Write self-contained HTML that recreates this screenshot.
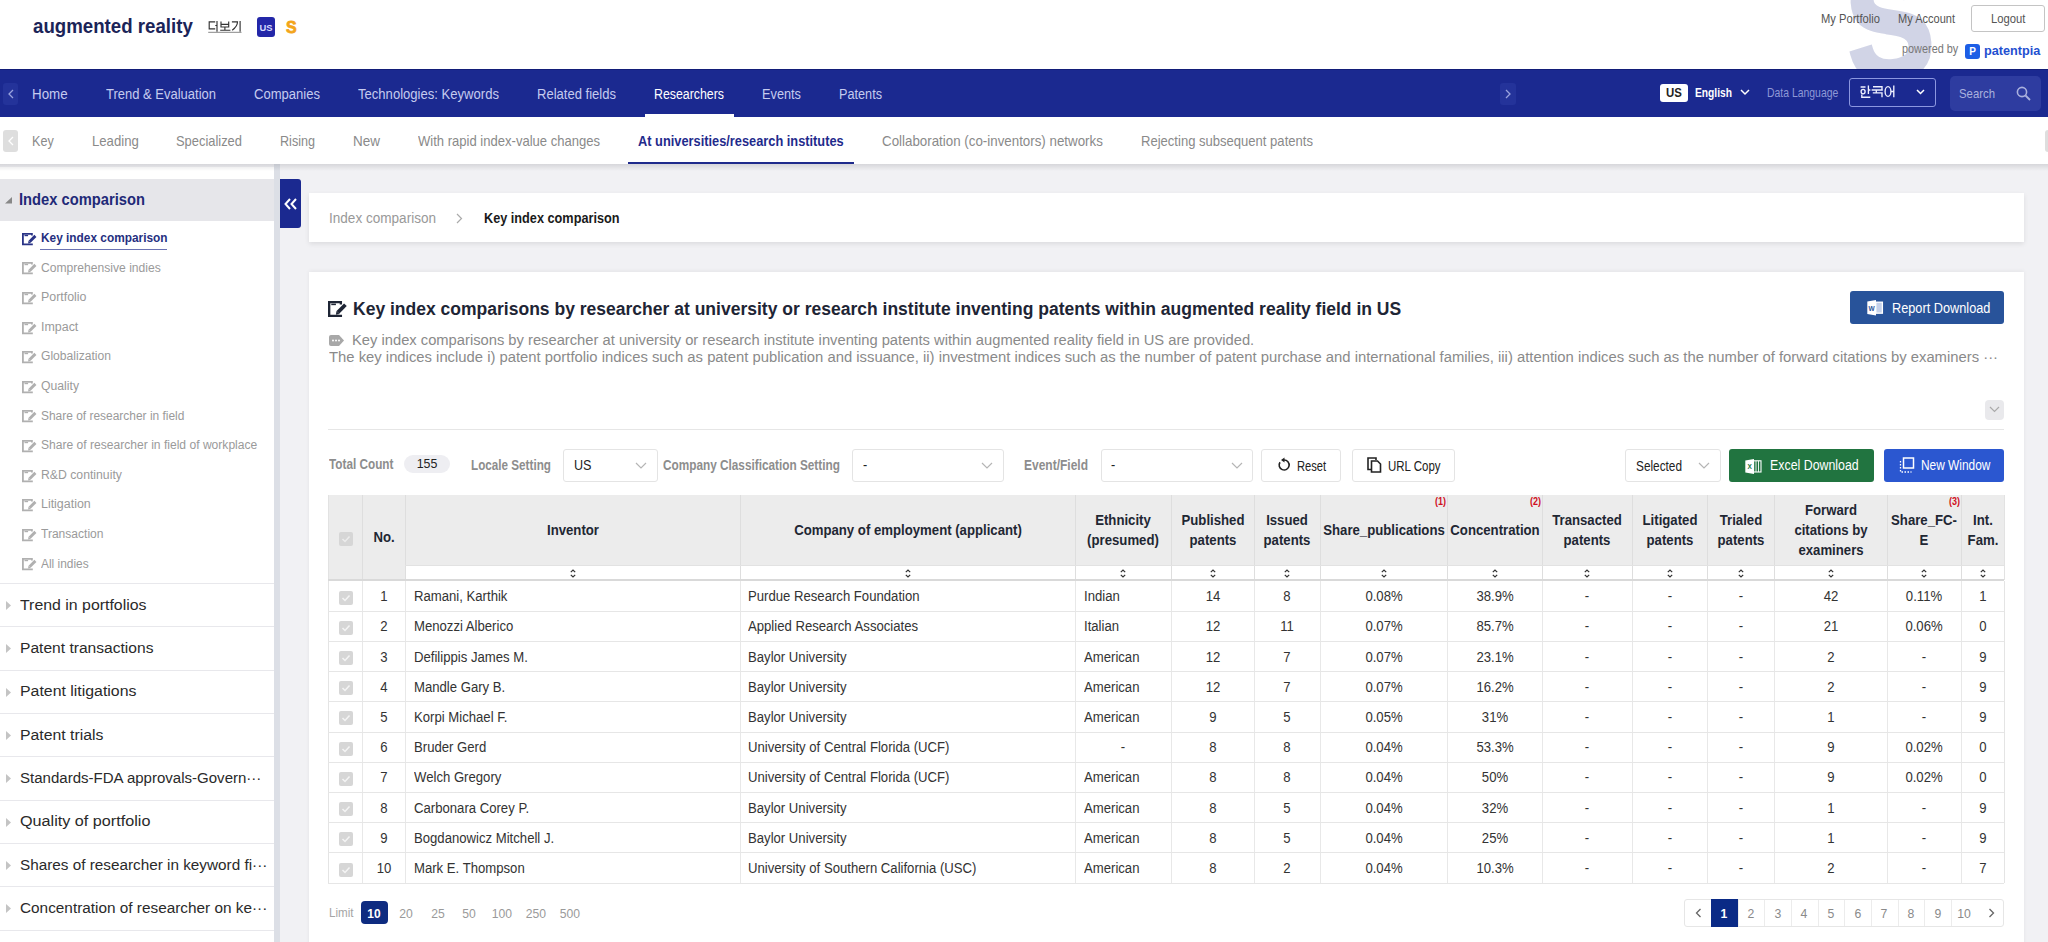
<!DOCTYPE html><html><head><meta charset="utf-8"><style>
html,body{margin:0;padding:0;width:2048px;height:942px;overflow:hidden;background:#f1f1f4;font-family:"Liberation Sans",sans-serif;}
.t{position:absolute;white-space:nowrap;line-height:1;}
svg{position:absolute;overflow:visible}
</style></head><body>

<div style="position:absolute;left:0px;top:0px;width:2048px;height:69px;background:#fff;overflow:hidden"></div>
<div style="position:absolute;left:0;top:0;width:2048px;height:69px;overflow:hidden"><div class="t" style="left:1847px;top:-40px;font-weight:bold;font-size:128px;color:#d1d4e6;-webkit-text-stroke:5px #d1d4e6;transform:scaleY(1.22) rotate(-5deg);transform-origin:50% 50%">S</div></div>
<div class="t" style="left:32.50px;top:17.05px;font-size:19.55px;color:#1b2458;font-weight:bold;transform:scaleX(0.9561);transform-origin:0 0;">augmented reality</div>
<svg style="left:208px;top:20px" width="35" height="14" viewBox="0 0 35 14">
<g fill="none" stroke="#333" stroke-width="1.15">
<path d="M7.2 1.8H1.2V8.9H7.2M9 1.1V11.7M7.3 5.5H9"/>
<path d="M13 1.4V7H20.7V1.4M13 4.35H20.7M16.9 7V10.2M12.2 10.2H22.4"/>
<path d="M23.9 1.8H29.5Q29.5 6.5 24.2 10.2M32.1 1.1V11.7"/>
</g><path d="M0.2 12.3H33.5" stroke="#888" stroke-width="1"/></svg>
<div style="position:absolute;left:256.5px;top:17px;width:18.7px;height:20.2px;background:#2327a8;border-radius:3px"></div>
<div class="t" style="left:-34.00px;top:23.14px;width:600px;text-align:center;font-size:9.40px;color:#d8dbff;font-weight:bold;transform:scaleX(1.0000);transform-origin:50% 0;">US</div>
<div class="t" style="left:286.30px;top:20.38px;font-size:16.80px;color:#f3a51a;font-weight:bold;transform:scaleX(0.9500);transform-origin:0 0;-webkit-text-stroke:0.8px #f3a51a;">S</div>
<div class="t" style="left:1821.00px;top:12.91px;font-size:12.15px;color:#555;font-weight:normal;transform:scaleX(0.9197);transform-origin:0 0;">My Portfolio</div>
<div class="t" style="left:1897.50px;top:12.91px;font-size:12.15px;color:#555;font-weight:normal;transform:scaleX(0.9075);transform-origin:0 0;">My Account</div>
<div style="position:absolute;left:1971.3px;top:5px;width:73.3px;height:27.3px;border:1px solid #c4c4c4;border-radius:3px;background:rgba(255,255,255,0.4);box-sizing:border-box"></div>
<div class="t" style="left:1991.30px;top:13.95px;font-size:11.87px;color:#555;font-weight:normal;transform:scaleX(0.9501);transform-origin:0 0;">Logout</div>
<div class="t" style="left:1901.70px;top:44.45px;font-size:11.87px;color:#777;font-weight:normal;transform:scaleX(0.9173);transform-origin:0 0;">powered by</div>
<div style="position:absolute;left:1965.3px;top:44.2px;width:14.7px;height:14.5px;background:#1d5ee6;border-radius:3px"></div>
<div class="t" style="left:1672.60px;top:47.14px;width:600px;text-align:center;font-size:10.00px;color:#fff;font-weight:bold;transform:scaleX(1.0000);transform-origin:50% 0;">P</div>
<div class="t" style="left:1984.00px;top:44.47px;font-size:13.27px;color:#1f50d0;font-weight:bold;transform:scaleX(0.9563);transform-origin:0 0;">patentpia</div>
<div style="position:absolute;left:0px;top:69px;width:2048px;height:48px;background:#1b2990"></div>
<div style="position:absolute;left:0px;top:69px;width:2048px;height:1.2px;background:#121d78"></div>
<div style="position:absolute;left:3px;top:82.7px;width:15px;height:22.3px;background:#24339a;border-radius:3px"></div>
<svg style="left:7px;top:89px" width="8" height="10"><path d="M6 1L2 5l4 4" fill="none" stroke="#9aa3de" stroke-width="1.3"/></svg>
<div class="t" style="left:32.20px;top:86.01px;font-size:15.22px;color:#c5cbef;font-weight:normal;transform:scaleX(0.8766);transform-origin:0 0;">Home</div>
<div class="t" style="left:106.00px;top:86.01px;font-size:15.22px;color:#c5cbef;font-weight:normal;transform:scaleX(0.8533);transform-origin:0 0;">Trend &amp; Evaluation</div>
<div class="t" style="left:254.00px;top:86.01px;font-size:15.22px;color:#c5cbef;font-weight:normal;transform:scaleX(0.8571);transform-origin:0 0;">Companies</div>
<div class="t" style="left:358.00px;top:86.01px;font-size:15.22px;color:#c5cbef;font-weight:normal;transform:scaleX(0.8589);transform-origin:0 0;">Technologies: Keywords</div>
<div class="t" style="left:537.00px;top:86.01px;font-size:15.22px;color:#c5cbef;font-weight:normal;transform:scaleX(0.8564);transform-origin:0 0;">Related fields</div>
<div class="t" style="left:654.00px;top:86.01px;font-size:15.22px;color:#ffffff;font-weight:normal;transform:scaleX(0.8111);transform-origin:0 0;">Researchers</div>
<div class="t" style="left:762.00px;top:86.01px;font-size:15.22px;color:#c5cbef;font-weight:normal;transform:scaleX(0.8380);transform-origin:0 0;">Events</div>
<div class="t" style="left:839.00px;top:86.01px;font-size:15.22px;color:#c5cbef;font-weight:normal;transform:scaleX(0.8329);transform-origin:0 0;">Patents</div>
<div style="position:absolute;left:645px;top:114px;width:89px;height:3px;background:#fff"></div>
<div style="position:absolute;left:1500px;top:83px;width:16px;height:22px;background:#24339a;border-radius:3px"></div>
<svg style="left:1504px;top:89px" width="8" height="10"><path d="M2 1l4 4-4 4" fill="none" stroke="#9aa3de" stroke-width="1.3"/></svg>
<div style="position:absolute;left:1659.5px;top:84.3px;width:28.3px;height:17.6px;background:#fff;border-radius:3px"></div>
<div class="t" style="left:1373.60px;top:87.04px;width:600px;text-align:center;font-size:12.00px;color:#222;font-weight:bold;transform:scaleX(0.9500);transform-origin:50% 0;">US</div>
<div class="t" style="left:1695.00px;top:85.79px;font-size:13.13px;color:#fff;font-weight:bold;transform:scaleX(0.7804);transform-origin:0 0;">English</div>
<svg style="left:1740px;top:89px" width="10" height="7"><path d="M1 1l4 4 4-4" fill="none" stroke="#fff" stroke-width="1.5"/></svg>
<div class="t" style="left:1766.50px;top:85.65px;font-size:13.41px;color:#8e98d6;font-weight:normal;transform:scaleX(0.7775);transform-origin:0 0;">Data Language</div>
<div style="position:absolute;left:1849px;top:78.2px;width:86.6px;height:28.8px;border:1.3px solid #8c97e0;border-radius:3px;box-sizing:border-box"></div>
<svg style="left:1859px;top:85px" width="38" height="14" viewBox="0 0 38 14">
<g fill="none" stroke="#eef0ff" stroke-width="1.35">
<path d="M1.6 2H6.5M9.4 0.5V9M9.4 5H11.4M2.8 9.6V12.2H11.3"/><ellipse cx="4.1" cy="6.6" rx="2" ry="2.2"/>
<path d="M14 1.7H23V4.6M12.6 5H23.8M17.3 5V7.5M13.8 7.9H23V12.3"/>
<ellipse cx="29" cy="6.5" rx="2.9" ry="4.9"/><path d="M34.8 0.5V12.3M32 6.5H34.8"/>
</g></svg>
<svg style="left:1916px;top:89px" width="9" height="6"><path d="M1 1l3.5 3.5L8 1" fill="none" stroke="#fff" stroke-width="1.5"/></svg>
<div style="position:absolute;left:1950px;top:75.6px;width:90.5px;height:35.2px;background:#2e3ca0;border-radius:5px"></div>
<div class="t" style="left:1959.00px;top:87.30px;font-size:12.99px;color:#aab1de;font-weight:normal;transform:scaleX(0.8747);transform-origin:0 0;">Search</div>
<svg style="left:2016px;top:86px" width="16" height="16"><circle cx="6" cy="6" r="4.6" fill="none" stroke="#aab1de" stroke-width="1.6"/><path d="M9.5 9.5l4.5 4.5" stroke="#aab1de" stroke-width="1.8"/></svg>
<div style="position:absolute;left:0px;top:117px;width:2048px;height:47px;background:#fff"></div>
<div style="position:absolute;left:3px;top:130px;width:15px;height:22.4px;background:#dedede;border-radius:3px"></div>
<svg style="left:7px;top:136px" width="8" height="10"><path d="M6 1L2 5l4 4" fill="none" stroke="#fff" stroke-width="1.3"/></svg>
<div style="position:absolute;left:2044.5px;top:130px;width:12px;height:22.4px;background:#dedede;border-radius:3px"></div>
<div class="t" style="left:32.00px;top:134.07px;font-size:14.80px;color:#8a8a8a;font-weight:normal;transform:scaleX(0.8506);transform-origin:0 0;">Key</div>
<div class="t" style="left:91.50px;top:134.07px;font-size:14.80px;color:#8a8a8a;font-weight:normal;transform:scaleX(0.8882);transform-origin:0 0;">Leading</div>
<div class="t" style="left:176.00px;top:134.07px;font-size:14.80px;color:#8a8a8a;font-weight:normal;transform:scaleX(0.8717);transform-origin:0 0;">Specialized</div>
<div class="t" style="left:280.00px;top:134.07px;font-size:14.80px;color:#8a8a8a;font-weight:normal;transform:scaleX(0.8507);transform-origin:0 0;">Rising</div>
<div class="t" style="left:353.00px;top:134.07px;font-size:14.80px;color:#8a8a8a;font-weight:normal;transform:scaleX(0.9116);transform-origin:0 0;">New</div>
<div class="t" style="left:417.60px;top:134.07px;font-size:14.80px;color:#8a8a8a;font-weight:normal;transform:scaleX(0.8816);transform-origin:0 0;">With rapid index-value changes</div>
<div class="t" style="left:638.00px;top:134.07px;font-size:14.80px;color:#1f2b8c;font-weight:bold;transform:scaleX(0.8655);transform-origin:0 0;">At universities/research institutes</div>
<div class="t" style="left:882.00px;top:134.07px;font-size:14.80px;color:#8a8a8a;font-weight:normal;transform:scaleX(0.9013);transform-origin:0 0;">Collaboration (co-inventors) networks</div>
<div class="t" style="left:1141.00px;top:134.07px;font-size:14.80px;color:#8a8a8a;font-weight:normal;transform:scaleX(0.8818);transform-origin:0 0;">Rejecting subsequent patents</div>
<div style="position:absolute;left:628.3px;top:161.5px;width:225.3px;height:2.6px;background:#1f2b8c"></div>
<div style="position:absolute;left:0px;top:167px;width:274px;height:775px;background:#fff"></div>
<div style="position:absolute;left:274px;top:164px;width:6px;height:778px;background:#dcdfe6"></div>
<div style="position:absolute;left:0px;top:179.2px;width:274px;height:42px;background:#e6e6ea"></div>
<svg style="left:5px;top:197px" width="8" height="7"><path d="M7 0L7 6.5L0 6.5Z" fill="#888"/></svg>
<div class="t" style="left:19.40px;top:191.40px;font-size:16.06px;color:#1f2a78;font-weight:bold;transform:scaleX(0.9167);transform-origin:0 0;">Index comparison</div>
<svg style="left:22px;top:232.79999999999998px" width="15.0" height="13.0" viewBox="0 0 15 13"><path d="M9.9 2.6V0.9H0.9V11.4H9.9V10.6" fill="none" stroke="#2a3486" stroke-width="1.8"/><path d="M2.5 2.6h3.6" stroke="#2a3486" stroke-width="1.2"/><path d="M13.4 2.9L7.6 8.7" stroke="#2a3486" stroke-width="2.9"/><path d="M6.1 10.6L6.5 7.7 8.9 10.1z" fill="#2a3486"/></svg>
<div class="t" style="left:40.90px;top:231.01px;font-size:13.69px;color:#26307f;font-weight:bold;transform:scaleX(0.8662);transform-origin:0 0;">Key index comparison</div>
<svg style="left:22px;top:262.4px" width="15.0" height="13.0" viewBox="0 0 15 13"><path d="M9.9 2.6V0.9H0.9V11.4H9.9V10.6" fill="none" stroke="#b0b0b0" stroke-width="1.8"/><path d="M2.5 2.6h3.6" stroke="#b0b0b0" stroke-width="1.2"/><path d="M13.4 2.9L7.6 8.7" stroke="#b0b0b0" stroke-width="2.9"/><path d="M6.1 10.6L6.5 7.7 8.9 10.1z" fill="#b0b0b0"/></svg>
<div class="t" style="left:40.90px;top:260.61px;font-size:13.69px;color:#9a9a9a;font-weight:normal;transform:scaleX(0.8846);transform-origin:0 0;">Comprehensive indies</div>
<svg style="left:22px;top:292.0px" width="15.0" height="13.0" viewBox="0 0 15 13"><path d="M9.9 2.6V0.9H0.9V11.4H9.9V10.6" fill="none" stroke="#b0b0b0" stroke-width="1.8"/><path d="M2.5 2.6h3.6" stroke="#b0b0b0" stroke-width="1.2"/><path d="M13.4 2.9L7.6 8.7" stroke="#b0b0b0" stroke-width="2.9"/><path d="M6.1 10.6L6.5 7.7 8.9 10.1z" fill="#b0b0b0"/></svg>
<div class="t" style="left:40.90px;top:290.21px;font-size:13.69px;color:#9a9a9a;font-weight:normal;transform:scaleX(0.9061);transform-origin:0 0;">Portfolio</div>
<svg style="left:22px;top:321.59999999999997px" width="15.0" height="13.0" viewBox="0 0 15 13"><path d="M9.9 2.6V0.9H0.9V11.4H9.9V10.6" fill="none" stroke="#b0b0b0" stroke-width="1.8"/><path d="M2.5 2.6h3.6" stroke="#b0b0b0" stroke-width="1.2"/><path d="M13.4 2.9L7.6 8.7" stroke="#b0b0b0" stroke-width="2.9"/><path d="M6.1 10.6L6.5 7.7 8.9 10.1z" fill="#b0b0b0"/></svg>
<div class="t" style="left:40.90px;top:319.81px;font-size:13.69px;color:#9a9a9a;font-weight:normal;transform:scaleX(0.9081);transform-origin:0 0;">Impact</div>
<svg style="left:22px;top:351.2px" width="15.0" height="13.0" viewBox="0 0 15 13"><path d="M9.9 2.6V0.9H0.9V11.4H9.9V10.6" fill="none" stroke="#b0b0b0" stroke-width="1.8"/><path d="M2.5 2.6h3.6" stroke="#b0b0b0" stroke-width="1.2"/><path d="M13.4 2.9L7.6 8.7" stroke="#b0b0b0" stroke-width="2.9"/><path d="M6.1 10.6L6.5 7.7 8.9 10.1z" fill="#b0b0b0"/></svg>
<div class="t" style="left:40.90px;top:349.41px;font-size:13.69px;color:#9a9a9a;font-weight:normal;transform:scaleX(0.8846);transform-origin:0 0;">Globalization</div>
<svg style="left:22px;top:380.8px" width="15.0" height="13.0" viewBox="0 0 15 13"><path d="M9.9 2.6V0.9H0.9V11.4H9.9V10.6" fill="none" stroke="#b0b0b0" stroke-width="1.8"/><path d="M2.5 2.6h3.6" stroke="#b0b0b0" stroke-width="1.2"/><path d="M13.4 2.9L7.6 8.7" stroke="#b0b0b0" stroke-width="2.9"/><path d="M6.1 10.6L6.5 7.7 8.9 10.1z" fill="#b0b0b0"/></svg>
<div class="t" style="left:40.90px;top:379.01px;font-size:13.69px;color:#9a9a9a;font-weight:normal;transform:scaleX(0.8920);transform-origin:0 0;">Quality</div>
<svg style="left:22px;top:410.40000000000003px" width="15.0" height="13.0" viewBox="0 0 15 13"><path d="M9.9 2.6V0.9H0.9V11.4H9.9V10.6" fill="none" stroke="#b0b0b0" stroke-width="1.8"/><path d="M2.5 2.6h3.6" stroke="#b0b0b0" stroke-width="1.2"/><path d="M13.4 2.9L7.6 8.7" stroke="#b0b0b0" stroke-width="2.9"/><path d="M6.1 10.6L6.5 7.7 8.9 10.1z" fill="#b0b0b0"/></svg>
<div class="t" style="left:40.90px;top:408.61px;font-size:13.69px;color:#9a9a9a;font-weight:normal;transform:scaleX(0.8726);transform-origin:0 0;">Share of researcher in field</div>
<svg style="left:22px;top:440.0px" width="15.0" height="13.0" viewBox="0 0 15 13"><path d="M9.9 2.6V0.9H0.9V11.4H9.9V10.6" fill="none" stroke="#b0b0b0" stroke-width="1.8"/><path d="M2.5 2.6h3.6" stroke="#b0b0b0" stroke-width="1.2"/><path d="M13.4 2.9L7.6 8.7" stroke="#b0b0b0" stroke-width="2.9"/><path d="M6.1 10.6L6.5 7.7 8.9 10.1z" fill="#b0b0b0"/></svg>
<div class="t" style="left:40.90px;top:438.21px;font-size:13.69px;color:#9a9a9a;font-weight:normal;transform:scaleX(0.8829);transform-origin:0 0;">Share of researcher in field of workplace</div>
<svg style="left:22px;top:469.59999999999997px" width="15.0" height="13.0" viewBox="0 0 15 13"><path d="M9.9 2.6V0.9H0.9V11.4H9.9V10.6" fill="none" stroke="#b0b0b0" stroke-width="1.8"/><path d="M2.5 2.6h3.6" stroke="#b0b0b0" stroke-width="1.2"/><path d="M13.4 2.9L7.6 8.7" stroke="#b0b0b0" stroke-width="2.9"/><path d="M6.1 10.6L6.5 7.7 8.9 10.1z" fill="#b0b0b0"/></svg>
<div class="t" style="left:40.90px;top:467.81px;font-size:13.69px;color:#9a9a9a;font-weight:normal;transform:scaleX(0.8937);transform-origin:0 0;">R&amp;D continuity</div>
<svg style="left:22px;top:499.2px" width="15.0" height="13.0" viewBox="0 0 15 13"><path d="M9.9 2.6V0.9H0.9V11.4H9.9V10.6" fill="none" stroke="#b0b0b0" stroke-width="1.8"/><path d="M2.5 2.6h3.6" stroke="#b0b0b0" stroke-width="1.2"/><path d="M13.4 2.9L7.6 8.7" stroke="#b0b0b0" stroke-width="2.9"/><path d="M6.1 10.6L6.5 7.7 8.9 10.1z" fill="#b0b0b0"/></svg>
<div class="t" style="left:40.90px;top:497.41px;font-size:13.69px;color:#9a9a9a;font-weight:normal;transform:scaleX(0.9071);transform-origin:0 0;">Litigation</div>
<svg style="left:22px;top:528.8000000000001px" width="15.0" height="13.0" viewBox="0 0 15 13"><path d="M9.9 2.6V0.9H0.9V11.4H9.9V10.6" fill="none" stroke="#b0b0b0" stroke-width="1.8"/><path d="M2.5 2.6h3.6" stroke="#b0b0b0" stroke-width="1.2"/><path d="M13.4 2.9L7.6 8.7" stroke="#b0b0b0" stroke-width="2.9"/><path d="M6.1 10.6L6.5 7.7 8.9 10.1z" fill="#b0b0b0"/></svg>
<div class="t" style="left:40.90px;top:527.01px;font-size:13.69px;color:#9a9a9a;font-weight:normal;transform:scaleX(0.8802);transform-origin:0 0;">Transaction</div>
<svg style="left:22px;top:558.4000000000001px" width="15.0" height="13.0" viewBox="0 0 15 13"><path d="M9.9 2.6V0.9H0.9V11.4H9.9V10.6" fill="none" stroke="#b0b0b0" stroke-width="1.8"/><path d="M2.5 2.6h3.6" stroke="#b0b0b0" stroke-width="1.2"/><path d="M13.4 2.9L7.6 8.7" stroke="#b0b0b0" stroke-width="2.9"/><path d="M6.1 10.6L6.5 7.7 8.9 10.1z" fill="#b0b0b0"/></svg>
<div class="t" style="left:40.90px;top:556.61px;font-size:13.69px;color:#9a9a9a;font-weight:normal;transform:scaleX(0.8690);transform-origin:0 0;">All indies</div>
<div style="position:absolute;left:40px;top:249px;width:127.4px;height:1.3px;background:#6a72b2"></div>
<div style="position:absolute;left:0px;top:583.0px;width:274px;height:1px;background:#e8e8ec"></div>
<svg style="left:6px;top:601.0px" width="6" height="9"><path d="M0 0L5 4.5L0 9Z" fill="#c4c4c4"/></svg>
<div class="t" style="left:19.80px;top:597.59px;font-size:14.66px;color:#2a2a2a;font-weight:normal;transform:scaleX(1.0836);transform-origin:0 0;">Trend in portfolios</div>
<div style="position:absolute;left:0px;top:626.35px;width:274px;height:1px;background:#e8e8ec"></div>
<svg style="left:6px;top:644.35px" width="6" height="9"><path d="M0 0L5 4.5L0 9Z" fill="#c4c4c4"/></svg>
<div class="t" style="left:19.80px;top:640.94px;font-size:14.66px;color:#2a2a2a;font-weight:normal;transform:scaleX(1.0634);transform-origin:0 0;">Patent transactions</div>
<div style="position:absolute;left:0px;top:669.7px;width:274px;height:1px;background:#e8e8ec"></div>
<svg style="left:6px;top:687.7px" width="6" height="9"><path d="M0 0L5 4.5L0 9Z" fill="#c4c4c4"/></svg>
<div class="t" style="left:19.80px;top:684.29px;font-size:14.66px;color:#2a2a2a;font-weight:normal;transform:scaleX(1.0826);transform-origin:0 0;">Patent litigations</div>
<div style="position:absolute;left:0px;top:713.05px;width:274px;height:1px;background:#e8e8ec"></div>
<svg style="left:6px;top:731.05px" width="6" height="9"><path d="M0 0L5 4.5L0 9Z" fill="#c4c4c4"/></svg>
<div class="t" style="left:19.80px;top:727.64px;font-size:14.66px;color:#2a2a2a;font-weight:normal;transform:scaleX(1.0783);transform-origin:0 0;">Patent trials</div>
<div style="position:absolute;left:0px;top:756.4px;width:274px;height:1px;background:#e8e8ec"></div>
<svg style="left:6px;top:774.4px" width="6" height="9"><path d="M0 0L5 4.5L0 9Z" fill="#c4c4c4"/></svg>
<div class="t" style="left:19.80px;top:770.99px;font-size:14.66px;color:#2a2a2a;font-weight:normal;transform:scaleX(1.0253);transform-origin:0 0;">Standards-FDA approvals-Govern···</div>
<div style="position:absolute;left:0px;top:799.75px;width:274px;height:1px;background:#e8e8ec"></div>
<svg style="left:6px;top:817.75px" width="6" height="9"><path d="M0 0L5 4.5L0 9Z" fill="#c4c4c4"/></svg>
<div class="t" style="left:19.80px;top:814.34px;font-size:14.66px;color:#2a2a2a;font-weight:normal;transform:scaleX(1.1041);transform-origin:0 0;">Quality of portfolio</div>
<div style="position:absolute;left:0px;top:843.1px;width:274px;height:1px;background:#e8e8ec"></div>
<svg style="left:6px;top:861.1px" width="6" height="9"><path d="M0 0L5 4.5L0 9Z" fill="#c4c4c4"/></svg>
<div class="t" style="left:19.80px;top:857.69px;font-size:14.66px;color:#2a2a2a;font-weight:normal;transform:scaleX(1.0435);transform-origin:0 0;">Shares of researcher in keyword fi···</div>
<div style="position:absolute;left:0px;top:886.45px;width:274px;height:1px;background:#e8e8ec"></div>
<svg style="left:6px;top:904.45px" width="6" height="9"><path d="M0 0L5 4.5L0 9Z" fill="#c4c4c4"/></svg>
<div class="t" style="left:19.80px;top:901.04px;font-size:14.66px;color:#2a2a2a;font-weight:normal;transform:scaleX(1.0470);transform-origin:0 0;">Concentration of researcher on ke···</div>
<div style="position:absolute;left:0px;top:929.8px;width:274px;height:1px;background:#e8e8ec"></div>
<div style="position:absolute;left:0px;top:164px;width:2048px;height:7px;background:linear-gradient(rgba(0,0,10,0.11),rgba(0,0,10,0))"></div>
<div style="position:absolute;left:280px;top:179px;width:21px;height:49px;background:#1b2990;border-radius:0 3px 3px 0"></div>
<svg style="left:284px;top:198px" width="14" height="12"><path d="M6 1L1.5 6 6 11M12 1L7.5 6 12 11" fill="none" stroke="#fff" stroke-width="2"/></svg>
<div style="position:absolute;left:309px;top:193px;width:1715px;height:49px;background:#fff;box-shadow:0 2px 5px rgba(0,0,0,0.09)"></div>
<div class="t" style="left:328.50px;top:211.68px;font-size:13.97px;color:#999;font-weight:normal;transform:scaleX(0.9706);transform-origin:0 0;">Index comparison</div>
<svg style="left:456px;top:213px" width="7" height="11"><path d="M1 1l4.5 4.5L1 10" fill="none" stroke="#aaa" stroke-width="1.2"/></svg>
<div class="t" style="left:484.00px;top:211.09px;font-size:14.66px;color:#1a1a1a;font-weight:bold;transform:scaleX(0.8666);transform-origin:0 0;">Key index comparison</div>
<div style="position:absolute;left:309px;top:272px;width:1715px;height:680px;background:#fff;box-shadow:0 -1px 4px rgba(0,0,0,0.06)"></div>
<svg style="left:328px;top:300.5px" width="19.5" height="16.900000000000002" viewBox="0 0 15 13"><path d="M9.9 2.6V0.9H0.9V11.4H9.9V10.6" fill="none" stroke="#1e2535" stroke-width="1.8"/><path d="M2.5 2.6h3.6" stroke="#1e2535" stroke-width="1.2"/><path d="M13.4 2.9L7.6 8.7" stroke="#1e2535" stroke-width="2.9"/><path d="M6.1 10.6L6.5 7.7 8.9 10.1z" fill="#1e2535"/></svg>
<div class="t" style="left:353.00px;top:299.98px;font-size:18.58px;color:#1e2535;font-weight:bold;transform:scaleX(0.9427);transform-origin:0 0;">Key index comparisons by researcher at university or research institute inventing patents within augmented reality field in US</div>
<div style="position:absolute;left:1850px;top:291px;width:154px;height:33px;background:#28539a;border-radius:3px"></div>
<svg style="left:1866.5px;top:300.3px" width="17" height="16" viewBox="0 0 17 16"><rect x="8.8" y="2.2" width="6.6" height="11" fill="#c5d1ea" stroke="#fff" stroke-width="1.3"/><path d="M0.3 1.5L9 0V15.5L0.3 14z" fill="#fff"/><text x="4.6" y="10.6" font-size="6.5" font-weight="bold" fill="#28539a" text-anchor="middle" font-family="Liberation Sans">W</text></svg>
<div class="t" style="left:1891.50px;top:300.82px;font-size:14.39px;color:#fff;font-weight:normal;transform:scaleX(0.8862);transform-origin:0 0;">Report Download</div>
<svg style="left:329px;top:334.7px" width="15" height="11" viewBox="0 0 15 11"><path d="M0 2a2 2 0 0 1 2-2h8l5 5.5-5 5.5H2a2 2 0 0 1-2-2z" fill="#a8a8a8"/><circle cx="4" cy="5.5" r="1" fill="#fff"/><circle cx="7" cy="5.5" r="1" fill="#fff"/><circle cx="10" cy="5.5" r="1" fill="#fff"/></svg>
<div class="t" style="left:352.30px;top:333.46px;font-size:14.11px;color:#8a8a8a;font-weight:normal;transform:scaleX(1.0439);transform-origin:0 0;">Key index comparisons by researcher at university or research institute inventing patents within augmented reality field in US are provided.</div>
<div class="t" style="left:329.30px;top:350.46px;font-size:14.11px;color:#8a8a8a;font-weight:normal;transform:scaleX(1.0504);transform-origin:0 0;">The key indices include i) patent portfolio indices such as patent publication and issuance, ii) investment indices such as the number of patent purchase and international families, iii) attention indices such as the number of forward citations by examiners ···</div>
<div style="position:absolute;left:1985px;top:400px;width:19px;height:20px;background:#e9e9ec;border-radius:4px"></div>
<svg style="left:1989px;top:406px" width="11" height="7"><path d="M1 1l4.5 4.5L10 1" fill="none" stroke="#aaa" stroke-width="1.2"/></svg>
<div style="position:absolute;left:328px;top:429px;width:1676px;height:1px;background:#e6e6e6"></div>
<div class="t" style="left:329.40px;top:456.76px;font-size:14.11px;color:#8d8d8d;font-weight:bold;transform:scaleX(0.8331);transform-origin:0 0;">Total Count</div>
<div style="position:absolute;left:404.4px;top:455.2px;width:45.5px;height:18px;background:#eeeef2;border-radius:9px"></div>
<div class="t" style="left:127.40px;top:457.27px;width:600px;text-align:center;font-size:13.50px;color:#222;font-weight:normal;transform:scaleX(0.9200);transform-origin:50% 0;">155</div>
<div class="t" style="left:470.80px;top:457.89px;font-size:14.66px;color:#8d8d8d;font-weight:bold;transform:scaleX(0.7982);transform-origin:0 0;">Locale Setting</div>
<div style="position:absolute;left:563px;top:448.8px;width:94.5px;height:33.4px;border:1px solid #e4e4e4;border-radius:3px;box-sizing:border-box;background:#fff"></div>
<div class="t" style="left:573.50px;top:458.45px;font-size:14.00px;color:#222;font-weight:normal;transform:scaleX(0.9000);transform-origin:0 0;">US</div>
<svg style="left:634.5px;top:462px" width="12" height="8"><path d="M1 1l5 5 5-5" fill="none" stroke="#b5b5b5" stroke-width="1.2"/></svg>
<div class="t" style="left:663.00px;top:457.89px;font-size:14.66px;color:#8d8d8d;font-weight:bold;transform:scaleX(0.8045);transform-origin:0 0;">Company Classification Setting</div>
<div style="position:absolute;left:851.9px;top:448.8px;width:152.10000000000002px;height:33.4px;border:1px solid #e4e4e4;border-radius:3px;box-sizing:border-box;background:#fff"></div>
<div class="t" style="left:862.70px;top:458.45px;font-size:14.00px;color:#222;font-weight:normal;transform:scaleX(0.9000);transform-origin:0 0;">-</div>
<svg style="left:980.5px;top:462px" width="12" height="8"><path d="M1 1l5 5 5-5" fill="none" stroke="#b5b5b5" stroke-width="1.2"/></svg>
<div class="t" style="left:1024.20px;top:457.89px;font-size:14.66px;color:#8d8d8d;font-weight:bold;transform:scaleX(0.8181);transform-origin:0 0;">Event/Field</div>
<div style="position:absolute;left:1101px;top:448.8px;width:152.29999999999995px;height:33.4px;border:1px solid #e4e4e4;border-radius:3px;box-sizing:border-box;background:#fff"></div>
<div class="t" style="left:1111.00px;top:458.45px;font-size:14.00px;color:#222;font-weight:normal;transform:scaleX(0.9000);transform-origin:0 0;">-</div>
<svg style="left:1230.5px;top:462px" width="12" height="8"><path d="M1 1l5 5 5-5" fill="none" stroke="#b5b5b5" stroke-width="1.2"/></svg>
<div style="position:absolute;left:1261.2px;top:448.8px;width:80.2px;height:33.4px;border:1px solid #e4e4e4;border-radius:3px;box-sizing:border-box;background:#fff"></div>
<svg style="left:1277px;top:458px" width="14" height="14" viewBox="0 0 14 14"><path d="M3 4.2A5 5 0 1 0 7 2" fill="none" stroke="#222" stroke-width="1.6"/><path d="M7.5 -0.5v5l-3.5-2.5z" fill="#222"/></svg>
<div class="t" style="left:1297.20px;top:458.72px;font-size:14.39px;color:#222;font-weight:normal;transform:scaleX(0.7770);transform-origin:0 0;">Reset</div>
<div style="position:absolute;left:1351.6px;top:448.8px;width:103.6px;height:33.4px;border:1px solid #e4e4e4;border-radius:3px;box-sizing:border-box;background:#fff"></div>
<svg style="left:1367px;top:457px" width="15" height="16" viewBox="0 0 15 16"><path d="M4 12.5H1V1h8v2" fill="none" stroke="#222" stroke-width="1.6"/><path d="M4.5 4h6l3 3v8h-9z" fill="none" stroke="#222" stroke-width="1.6"/></svg>
<div class="t" style="left:1387.90px;top:458.72px;font-size:14.39px;color:#222;font-weight:normal;transform:scaleX(0.7991);transform-origin:0 0;">URL Copy</div>
<div style="position:absolute;left:1625px;top:448.8px;width:96px;height:33.4px;border:1px solid #e4e4e4;border-radius:3px;box-sizing:border-box;background:#fff"></div>
<div class="t" style="left:1635.50px;top:458.72px;font-size:14.39px;color:#222;font-weight:normal;transform:scaleX(0.8217);transform-origin:0 0;">Selected</div>
<svg style="left:1698px;top:462px" width="12" height="8"><path d="M1 1l5 5 5-5" fill="none" stroke="#b5b5b5" stroke-width="1.2"/></svg>
<div style="position:absolute;left:1728.5px;top:449px;width:145.2px;height:33px;background:#217440;border-radius:3px"></div>
<svg style="left:1744.5px;top:458.5px" width="17" height="15" viewBox="0 0 17 15"><rect x="8.6" y="1.8" width="7.4" height="11.2" fill="none" stroke="#fff" stroke-width="1.1"/><path d="M11 1.8v11.2M13.5 1.8v11.2" stroke="#fff" stroke-width="0.9"/><path d="M0.3 1.4L9 0V15L0.3 13.6z" fill="#fff"/><text x="4.6" y="10.3" font-size="6.5" font-weight="bold" fill="#217440" text-anchor="middle" font-family="Liberation Sans">X</text></svg>
<div class="t" style="left:1770.00px;top:458.49px;font-size:14.66px;color:#fff;font-weight:normal;transform:scaleX(0.8445);transform-origin:0 0;">Excel Download</div>
<div style="position:absolute;left:1884px;top:449px;width:120.4px;height:33px;background:#2b57d0;border-radius:3px"></div>
<svg style="left:1899px;top:457px" width="16" height="16" viewBox="0 0 16 16"><rect x="4.5" y="1" width="10" height="10" fill="none" stroke="#fff" stroke-width="1.5"/><path d="M1.5 4v11h11" fill="none" stroke="#fff" stroke-width="1.3" stroke-dasharray="1.5 1.5"/></svg>
<div class="t" style="left:1921.30px;top:458.49px;font-size:14.66px;color:#fff;font-weight:normal;transform:scaleX(0.8122);transform-origin:0 0;">New Window</div>
<div style="position:absolute;left:328px;top:494.7px;width:1676.4px;height:85.59999999999997px;background:#ececec"></div>
<div style="position:absolute;left:405.4px;top:565.2px;width:1599.0px;height:15.099999999999909px;background:#fff"></div>
<div style="position:absolute;left:361.9px;top:494.7px;width:1px;height:85.59999999999997px;background:#dedede"></div>
<div style="position:absolute;left:404.9px;top:494.7px;width:1px;height:85.59999999999997px;background:#dedede"></div>
<div style="position:absolute;left:739.9px;top:494.7px;width:1px;height:85.59999999999997px;background:#dedede"></div>
<div style="position:absolute;left:1074.9px;top:494.7px;width:1px;height:85.59999999999997px;background:#dedede"></div>
<div style="position:absolute;left:1170.5px;top:494.7px;width:1px;height:85.59999999999997px;background:#dedede"></div>
<div style="position:absolute;left:1254.1px;top:494.7px;width:1px;height:85.59999999999997px;background:#dedede"></div>
<div style="position:absolute;left:1319.5px;top:494.7px;width:1px;height:85.59999999999997px;background:#dedede"></div>
<div style="position:absolute;left:1446.5px;top:494.7px;width:1px;height:85.59999999999997px;background:#dedede"></div>
<div style="position:absolute;left:1541.7px;top:494.7px;width:1px;height:85.59999999999997px;background:#dedede"></div>
<div style="position:absolute;left:1631.8px;top:494.7px;width:1px;height:85.59999999999997px;background:#dedede"></div>
<div style="position:absolute;left:1707.0px;top:494.7px;width:1px;height:85.59999999999997px;background:#dedede"></div>
<div style="position:absolute;left:1773.9px;top:494.7px;width:1px;height:85.59999999999997px;background:#dedede"></div>
<div style="position:absolute;left:1886.8px;top:494.7px;width:1px;height:85.59999999999997px;background:#dedede"></div>
<div style="position:absolute;left:1960.5px;top:494.7px;width:1px;height:85.59999999999997px;background:#dedede"></div>
<div style="position:absolute;left:328px;top:494.7px;width:1px;height:85.59999999999997px;background:#e2e2e2"></div>
<div style="position:absolute;left:2003.9px;top:494.7px;width:1px;height:85.59999999999997px;background:#e2e2e2"></div>
<div style="position:absolute;left:405.4px;top:564.7px;width:1599.0px;height:1px;background:#e2e2e2"></div>
<div style="position:absolute;left:328px;top:578.6px;width:1676.4px;height:2.4px;background:#d9d9d9"></div>
<div style="position:absolute;left:328px;top:581.0px;width:1px;height:302.20000000000005px;background:#e4e4e4"></div>
<div style="position:absolute;left:2003.9px;top:581.0px;width:1px;height:302.20000000000005px;background:#e4e4e4"></div>
<div style="position:absolute;left:361.9px;top:581.0px;width:1px;height:302.20000000000005px;background:#e8e8e8"></div>
<div style="position:absolute;left:404.9px;top:581.0px;width:1px;height:302.20000000000005px;background:#e8e8e8"></div>
<div style="position:absolute;left:739.9px;top:581.0px;width:1px;height:302.20000000000005px;background:#e8e8e8"></div>
<div style="position:absolute;left:1074.9px;top:581.0px;width:1px;height:302.20000000000005px;background:#e8e8e8"></div>
<div style="position:absolute;left:1170.5px;top:581.0px;width:1px;height:302.20000000000005px;background:#e8e8e8"></div>
<div style="position:absolute;left:1254.1px;top:581.0px;width:1px;height:302.20000000000005px;background:#e8e8e8"></div>
<div style="position:absolute;left:1319.5px;top:581.0px;width:1px;height:302.20000000000005px;background:#e8e8e8"></div>
<div style="position:absolute;left:1446.5px;top:581.0px;width:1px;height:302.20000000000005px;background:#e8e8e8"></div>
<div style="position:absolute;left:1541.7px;top:581.0px;width:1px;height:302.20000000000005px;background:#e8e8e8"></div>
<div style="position:absolute;left:1631.8px;top:581.0px;width:1px;height:302.20000000000005px;background:#e8e8e8"></div>
<div style="position:absolute;left:1707.0px;top:581.0px;width:1px;height:302.20000000000005px;background:#e8e8e8"></div>
<div style="position:absolute;left:1773.9px;top:581.0px;width:1px;height:302.20000000000005px;background:#e8e8e8"></div>
<div style="position:absolute;left:1886.8px;top:581.0px;width:1px;height:302.20000000000005px;background:#e8e8e8"></div>
<div style="position:absolute;left:1960.5px;top:581.0px;width:1px;height:302.20000000000005px;background:#e8e8e8"></div>
<div style="position:absolute;left:328px;top:610.72px;width:1676.4px;height:1px;background:#e6e6e6"></div>
<div style="position:absolute;left:339px;top:590.61px;width:14px;height:14px;background:#d6d6d6;border-radius:2px"></div>
<svg style="left:341px;top:592.61px" width="10" height="10"><path d="M1.5 5l2.5 2.5 4.5-5" fill="none" stroke="#f4f4f4" stroke-width="1.5"/></svg>
<div class="t" style="left:83.90px;top:589.14px;width:600px;text-align:center;font-size:14.25px;color:#333;font-weight:normal;transform:scaleX(0.9216);transform-origin:50% 0;">1</div>
<div class="t" style="left:413.80px;top:589.14px;font-size:14.25px;color:#333;font-weight:normal;transform:scaleX(0.9216);transform-origin:0 0;">Ramani, Karthik</div>
<div class="t" style="left:748.20px;top:589.14px;font-size:14.25px;color:#333;font-weight:normal;transform:scaleX(0.9216);transform-origin:0 0;">Purdue Research Foundation</div>
<div class="t" style="left:1083.70px;top:589.14px;font-size:14.25px;color:#333;font-weight:normal;transform:scaleX(0.9216);transform-origin:0 0;">Indian</div>
<div class="t" style="left:912.80px;top:589.14px;width:600px;text-align:center;font-size:14.25px;color:#333;font-weight:normal;transform:scaleX(0.9216);transform-origin:50% 0;">14</div>
<div class="t" style="left:987.30px;top:589.14px;width:600px;text-align:center;font-size:14.25px;color:#333;font-weight:normal;transform:scaleX(0.9216);transform-origin:50% 0;">8</div>
<div class="t" style="left:1083.50px;top:589.14px;width:600px;text-align:center;font-size:14.25px;color:#333;font-weight:normal;transform:scaleX(0.9216);transform-origin:50% 0;">0.08%</div>
<div class="t" style="left:1194.60px;top:589.14px;width:600px;text-align:center;font-size:14.25px;color:#333;font-weight:normal;transform:scaleX(0.9216);transform-origin:50% 0;">38.9%</div>
<div class="t" style="left:1287.25px;top:589.14px;width:600px;text-align:center;font-size:14.25px;color:#333;font-weight:normal;transform:scaleX(0.9216);transform-origin:50% 0;">-</div>
<div class="t" style="left:1369.90px;top:589.14px;width:600px;text-align:center;font-size:14.25px;color:#333;font-weight:normal;transform:scaleX(0.9216);transform-origin:50% 0;">-</div>
<div class="t" style="left:1440.95px;top:589.14px;width:600px;text-align:center;font-size:14.25px;color:#333;font-weight:normal;transform:scaleX(0.9216);transform-origin:50% 0;">-</div>
<div class="t" style="left:1530.85px;top:589.14px;width:600px;text-align:center;font-size:14.25px;color:#333;font-weight:normal;transform:scaleX(0.9216);transform-origin:50% 0;">42</div>
<div class="t" style="left:1624.15px;top:589.14px;width:600px;text-align:center;font-size:14.25px;color:#333;font-weight:normal;transform:scaleX(0.9216);transform-origin:50% 0;">0.11%</div>
<div class="t" style="left:1682.70px;top:589.14px;width:600px;text-align:center;font-size:14.25px;color:#333;font-weight:normal;transform:scaleX(0.9216);transform-origin:50% 0;">1</div>
<div style="position:absolute;left:328px;top:640.94px;width:1676.4px;height:1px;background:#e6e6e6"></div>
<div style="position:absolute;left:339px;top:620.83px;width:14px;height:14px;background:#d6d6d6;border-radius:2px"></div>
<svg style="left:341px;top:622.83px" width="10" height="10"><path d="M1.5 5l2.5 2.5 4.5-5" fill="none" stroke="#f4f4f4" stroke-width="1.5"/></svg>
<div class="t" style="left:83.90px;top:619.36px;width:600px;text-align:center;font-size:14.25px;color:#333;font-weight:normal;transform:scaleX(0.9216);transform-origin:50% 0;">2</div>
<div class="t" style="left:413.80px;top:619.36px;font-size:14.25px;color:#333;font-weight:normal;transform:scaleX(0.9216);transform-origin:0 0;">Menozzi Alberico</div>
<div class="t" style="left:748.20px;top:619.36px;font-size:14.25px;color:#333;font-weight:normal;transform:scaleX(0.9216);transform-origin:0 0;">Applied Research Associates</div>
<div class="t" style="left:1083.70px;top:619.36px;font-size:14.25px;color:#333;font-weight:normal;transform:scaleX(0.9216);transform-origin:0 0;">Italian</div>
<div class="t" style="left:912.80px;top:619.36px;width:600px;text-align:center;font-size:14.25px;color:#333;font-weight:normal;transform:scaleX(0.9216);transform-origin:50% 0;">12</div>
<div class="t" style="left:987.30px;top:619.36px;width:600px;text-align:center;font-size:14.25px;color:#333;font-weight:normal;transform:scaleX(0.9216);transform-origin:50% 0;">11</div>
<div class="t" style="left:1083.50px;top:619.36px;width:600px;text-align:center;font-size:14.25px;color:#333;font-weight:normal;transform:scaleX(0.9216);transform-origin:50% 0;">0.07%</div>
<div class="t" style="left:1194.60px;top:619.36px;width:600px;text-align:center;font-size:14.25px;color:#333;font-weight:normal;transform:scaleX(0.9216);transform-origin:50% 0;">85.7%</div>
<div class="t" style="left:1287.25px;top:619.36px;width:600px;text-align:center;font-size:14.25px;color:#333;font-weight:normal;transform:scaleX(0.9216);transform-origin:50% 0;">-</div>
<div class="t" style="left:1369.90px;top:619.36px;width:600px;text-align:center;font-size:14.25px;color:#333;font-weight:normal;transform:scaleX(0.9216);transform-origin:50% 0;">-</div>
<div class="t" style="left:1440.95px;top:619.36px;width:600px;text-align:center;font-size:14.25px;color:#333;font-weight:normal;transform:scaleX(0.9216);transform-origin:50% 0;">-</div>
<div class="t" style="left:1530.85px;top:619.36px;width:600px;text-align:center;font-size:14.25px;color:#333;font-weight:normal;transform:scaleX(0.9216);transform-origin:50% 0;">21</div>
<div class="t" style="left:1624.15px;top:619.36px;width:600px;text-align:center;font-size:14.25px;color:#333;font-weight:normal;transform:scaleX(0.9216);transform-origin:50% 0;">0.06%</div>
<div class="t" style="left:1682.70px;top:619.36px;width:600px;text-align:center;font-size:14.25px;color:#333;font-weight:normal;transform:scaleX(0.9216);transform-origin:50% 0;">0</div>
<div style="position:absolute;left:328px;top:671.1600000000001px;width:1676.4px;height:1px;background:#e6e6e6"></div>
<div style="position:absolute;left:339px;top:651.0500000000001px;width:14px;height:14px;background:#d6d6d6;border-radius:2px"></div>
<svg style="left:341px;top:653.0500000000001px" width="10" height="10"><path d="M1.5 5l2.5 2.5 4.5-5" fill="none" stroke="#f4f4f4" stroke-width="1.5"/></svg>
<div class="t" style="left:83.90px;top:649.58px;width:600px;text-align:center;font-size:14.25px;color:#333;font-weight:normal;transform:scaleX(0.9216);transform-origin:50% 0;">3</div>
<div class="t" style="left:413.80px;top:649.58px;font-size:14.25px;color:#333;font-weight:normal;transform:scaleX(0.9216);transform-origin:0 0;">Defilippis James M.</div>
<div class="t" style="left:748.20px;top:649.58px;font-size:14.25px;color:#333;font-weight:normal;transform:scaleX(0.9216);transform-origin:0 0;">Baylor University</div>
<div class="t" style="left:1083.70px;top:649.58px;font-size:14.25px;color:#333;font-weight:normal;transform:scaleX(0.9216);transform-origin:0 0;">American</div>
<div class="t" style="left:912.80px;top:649.58px;width:600px;text-align:center;font-size:14.25px;color:#333;font-weight:normal;transform:scaleX(0.9216);transform-origin:50% 0;">12</div>
<div class="t" style="left:987.30px;top:649.58px;width:600px;text-align:center;font-size:14.25px;color:#333;font-weight:normal;transform:scaleX(0.9216);transform-origin:50% 0;">7</div>
<div class="t" style="left:1083.50px;top:649.58px;width:600px;text-align:center;font-size:14.25px;color:#333;font-weight:normal;transform:scaleX(0.9216);transform-origin:50% 0;">0.07%</div>
<div class="t" style="left:1194.60px;top:649.58px;width:600px;text-align:center;font-size:14.25px;color:#333;font-weight:normal;transform:scaleX(0.9216);transform-origin:50% 0;">23.1%</div>
<div class="t" style="left:1287.25px;top:649.58px;width:600px;text-align:center;font-size:14.25px;color:#333;font-weight:normal;transform:scaleX(0.9216);transform-origin:50% 0;">-</div>
<div class="t" style="left:1369.90px;top:649.58px;width:600px;text-align:center;font-size:14.25px;color:#333;font-weight:normal;transform:scaleX(0.9216);transform-origin:50% 0;">-</div>
<div class="t" style="left:1440.95px;top:649.58px;width:600px;text-align:center;font-size:14.25px;color:#333;font-weight:normal;transform:scaleX(0.9216);transform-origin:50% 0;">-</div>
<div class="t" style="left:1530.85px;top:649.58px;width:600px;text-align:center;font-size:14.25px;color:#333;font-weight:normal;transform:scaleX(0.9216);transform-origin:50% 0;">2</div>
<div class="t" style="left:1624.15px;top:649.58px;width:600px;text-align:center;font-size:14.25px;color:#333;font-weight:normal;transform:scaleX(0.9216);transform-origin:50% 0;">-</div>
<div class="t" style="left:1682.70px;top:649.58px;width:600px;text-align:center;font-size:14.25px;color:#333;font-weight:normal;transform:scaleX(0.9216);transform-origin:50% 0;">9</div>
<div style="position:absolute;left:328px;top:701.38px;width:1676.4px;height:1px;background:#e6e6e6"></div>
<div style="position:absolute;left:339px;top:681.27px;width:14px;height:14px;background:#d6d6d6;border-radius:2px"></div>
<svg style="left:341px;top:683.27px" width="10" height="10"><path d="M1.5 5l2.5 2.5 4.5-5" fill="none" stroke="#f4f4f4" stroke-width="1.5"/></svg>
<div class="t" style="left:83.90px;top:679.80px;width:600px;text-align:center;font-size:14.25px;color:#333;font-weight:normal;transform:scaleX(0.9216);transform-origin:50% 0;">4</div>
<div class="t" style="left:413.80px;top:679.80px;font-size:14.25px;color:#333;font-weight:normal;transform:scaleX(0.9216);transform-origin:0 0;">Mandle Gary B.</div>
<div class="t" style="left:748.20px;top:679.80px;font-size:14.25px;color:#333;font-weight:normal;transform:scaleX(0.9216);transform-origin:0 0;">Baylor University</div>
<div class="t" style="left:1083.70px;top:679.80px;font-size:14.25px;color:#333;font-weight:normal;transform:scaleX(0.9216);transform-origin:0 0;">American</div>
<div class="t" style="left:912.80px;top:679.80px;width:600px;text-align:center;font-size:14.25px;color:#333;font-weight:normal;transform:scaleX(0.9216);transform-origin:50% 0;">12</div>
<div class="t" style="left:987.30px;top:679.80px;width:600px;text-align:center;font-size:14.25px;color:#333;font-weight:normal;transform:scaleX(0.9216);transform-origin:50% 0;">7</div>
<div class="t" style="left:1083.50px;top:679.80px;width:600px;text-align:center;font-size:14.25px;color:#333;font-weight:normal;transform:scaleX(0.9216);transform-origin:50% 0;">0.07%</div>
<div class="t" style="left:1194.60px;top:679.80px;width:600px;text-align:center;font-size:14.25px;color:#333;font-weight:normal;transform:scaleX(0.9216);transform-origin:50% 0;">16.2%</div>
<div class="t" style="left:1287.25px;top:679.80px;width:600px;text-align:center;font-size:14.25px;color:#333;font-weight:normal;transform:scaleX(0.9216);transform-origin:50% 0;">-</div>
<div class="t" style="left:1369.90px;top:679.80px;width:600px;text-align:center;font-size:14.25px;color:#333;font-weight:normal;transform:scaleX(0.9216);transform-origin:50% 0;">-</div>
<div class="t" style="left:1440.95px;top:679.80px;width:600px;text-align:center;font-size:14.25px;color:#333;font-weight:normal;transform:scaleX(0.9216);transform-origin:50% 0;">-</div>
<div class="t" style="left:1530.85px;top:679.80px;width:600px;text-align:center;font-size:14.25px;color:#333;font-weight:normal;transform:scaleX(0.9216);transform-origin:50% 0;">2</div>
<div class="t" style="left:1624.15px;top:679.80px;width:600px;text-align:center;font-size:14.25px;color:#333;font-weight:normal;transform:scaleX(0.9216);transform-origin:50% 0;">-</div>
<div class="t" style="left:1682.70px;top:679.80px;width:600px;text-align:center;font-size:14.25px;color:#333;font-weight:normal;transform:scaleX(0.9216);transform-origin:50% 0;">9</div>
<div style="position:absolute;left:328px;top:731.6px;width:1676.4px;height:1px;background:#e6e6e6"></div>
<div style="position:absolute;left:339px;top:711.49px;width:14px;height:14px;background:#d6d6d6;border-radius:2px"></div>
<svg style="left:341px;top:713.49px" width="10" height="10"><path d="M1.5 5l2.5 2.5 4.5-5" fill="none" stroke="#f4f4f4" stroke-width="1.5"/></svg>
<div class="t" style="left:83.90px;top:710.02px;width:600px;text-align:center;font-size:14.25px;color:#333;font-weight:normal;transform:scaleX(0.9216);transform-origin:50% 0;">5</div>
<div class="t" style="left:413.80px;top:710.02px;font-size:14.25px;color:#333;font-weight:normal;transform:scaleX(0.9216);transform-origin:0 0;">Korpi Michael F.</div>
<div class="t" style="left:748.20px;top:710.02px;font-size:14.25px;color:#333;font-weight:normal;transform:scaleX(0.9216);transform-origin:0 0;">Baylor University</div>
<div class="t" style="left:1083.70px;top:710.02px;font-size:14.25px;color:#333;font-weight:normal;transform:scaleX(0.9216);transform-origin:0 0;">American</div>
<div class="t" style="left:912.80px;top:710.02px;width:600px;text-align:center;font-size:14.25px;color:#333;font-weight:normal;transform:scaleX(0.9216);transform-origin:50% 0;">9</div>
<div class="t" style="left:987.30px;top:710.02px;width:600px;text-align:center;font-size:14.25px;color:#333;font-weight:normal;transform:scaleX(0.9216);transform-origin:50% 0;">5</div>
<div class="t" style="left:1083.50px;top:710.02px;width:600px;text-align:center;font-size:14.25px;color:#333;font-weight:normal;transform:scaleX(0.9216);transform-origin:50% 0;">0.05%</div>
<div class="t" style="left:1194.60px;top:710.02px;width:600px;text-align:center;font-size:14.25px;color:#333;font-weight:normal;transform:scaleX(0.9216);transform-origin:50% 0;">31%</div>
<div class="t" style="left:1287.25px;top:710.02px;width:600px;text-align:center;font-size:14.25px;color:#333;font-weight:normal;transform:scaleX(0.9216);transform-origin:50% 0;">-</div>
<div class="t" style="left:1369.90px;top:710.02px;width:600px;text-align:center;font-size:14.25px;color:#333;font-weight:normal;transform:scaleX(0.9216);transform-origin:50% 0;">-</div>
<div class="t" style="left:1440.95px;top:710.02px;width:600px;text-align:center;font-size:14.25px;color:#333;font-weight:normal;transform:scaleX(0.9216);transform-origin:50% 0;">-</div>
<div class="t" style="left:1530.85px;top:710.02px;width:600px;text-align:center;font-size:14.25px;color:#333;font-weight:normal;transform:scaleX(0.9216);transform-origin:50% 0;">1</div>
<div class="t" style="left:1624.15px;top:710.02px;width:600px;text-align:center;font-size:14.25px;color:#333;font-weight:normal;transform:scaleX(0.9216);transform-origin:50% 0;">-</div>
<div class="t" style="left:1682.70px;top:710.02px;width:600px;text-align:center;font-size:14.25px;color:#333;font-weight:normal;transform:scaleX(0.9216);transform-origin:50% 0;">9</div>
<div style="position:absolute;left:328px;top:761.82px;width:1676.4px;height:1px;background:#e6e6e6"></div>
<div style="position:absolute;left:339px;top:741.71px;width:14px;height:14px;background:#d6d6d6;border-radius:2px"></div>
<svg style="left:341px;top:743.71px" width="10" height="10"><path d="M1.5 5l2.5 2.5 4.5-5" fill="none" stroke="#f4f4f4" stroke-width="1.5"/></svg>
<div class="t" style="left:83.90px;top:740.24px;width:600px;text-align:center;font-size:14.25px;color:#333;font-weight:normal;transform:scaleX(0.9216);transform-origin:50% 0;">6</div>
<div class="t" style="left:413.80px;top:740.24px;font-size:14.25px;color:#333;font-weight:normal;transform:scaleX(0.9216);transform-origin:0 0;">Bruder Gerd</div>
<div class="t" style="left:748.20px;top:740.24px;font-size:14.25px;color:#333;font-weight:normal;transform:scaleX(0.9216);transform-origin:0 0;">University of Central Florida (UCF)</div>
<div class="t" style="left:823.20px;top:740.24px;width:600px;text-align:center;font-size:14.25px;color:#333;font-weight:normal;transform:scaleX(0.9216);transform-origin:50% 0;">-</div>
<div class="t" style="left:912.80px;top:740.24px;width:600px;text-align:center;font-size:14.25px;color:#333;font-weight:normal;transform:scaleX(0.9216);transform-origin:50% 0;">8</div>
<div class="t" style="left:987.30px;top:740.24px;width:600px;text-align:center;font-size:14.25px;color:#333;font-weight:normal;transform:scaleX(0.9216);transform-origin:50% 0;">8</div>
<div class="t" style="left:1083.50px;top:740.24px;width:600px;text-align:center;font-size:14.25px;color:#333;font-weight:normal;transform:scaleX(0.9216);transform-origin:50% 0;">0.04%</div>
<div class="t" style="left:1194.60px;top:740.24px;width:600px;text-align:center;font-size:14.25px;color:#333;font-weight:normal;transform:scaleX(0.9216);transform-origin:50% 0;">53.3%</div>
<div class="t" style="left:1287.25px;top:740.24px;width:600px;text-align:center;font-size:14.25px;color:#333;font-weight:normal;transform:scaleX(0.9216);transform-origin:50% 0;">-</div>
<div class="t" style="left:1369.90px;top:740.24px;width:600px;text-align:center;font-size:14.25px;color:#333;font-weight:normal;transform:scaleX(0.9216);transform-origin:50% 0;">-</div>
<div class="t" style="left:1440.95px;top:740.24px;width:600px;text-align:center;font-size:14.25px;color:#333;font-weight:normal;transform:scaleX(0.9216);transform-origin:50% 0;">-</div>
<div class="t" style="left:1530.85px;top:740.24px;width:600px;text-align:center;font-size:14.25px;color:#333;font-weight:normal;transform:scaleX(0.9216);transform-origin:50% 0;">9</div>
<div class="t" style="left:1624.15px;top:740.24px;width:600px;text-align:center;font-size:14.25px;color:#333;font-weight:normal;transform:scaleX(0.9216);transform-origin:50% 0;">0.02%</div>
<div class="t" style="left:1682.70px;top:740.24px;width:600px;text-align:center;font-size:14.25px;color:#333;font-weight:normal;transform:scaleX(0.9216);transform-origin:50% 0;">0</div>
<div style="position:absolute;left:328px;top:792.04px;width:1676.4px;height:1px;background:#e6e6e6"></div>
<div style="position:absolute;left:339px;top:771.93px;width:14px;height:14px;background:#d6d6d6;border-radius:2px"></div>
<svg style="left:341px;top:773.93px" width="10" height="10"><path d="M1.5 5l2.5 2.5 4.5-5" fill="none" stroke="#f4f4f4" stroke-width="1.5"/></svg>
<div class="t" style="left:83.90px;top:770.46px;width:600px;text-align:center;font-size:14.25px;color:#333;font-weight:normal;transform:scaleX(0.9216);transform-origin:50% 0;">7</div>
<div class="t" style="left:413.80px;top:770.46px;font-size:14.25px;color:#333;font-weight:normal;transform:scaleX(0.9216);transform-origin:0 0;">Welch Gregory</div>
<div class="t" style="left:748.20px;top:770.46px;font-size:14.25px;color:#333;font-weight:normal;transform:scaleX(0.9216);transform-origin:0 0;">University of Central Florida (UCF)</div>
<div class="t" style="left:1083.70px;top:770.46px;font-size:14.25px;color:#333;font-weight:normal;transform:scaleX(0.9216);transform-origin:0 0;">American</div>
<div class="t" style="left:912.80px;top:770.46px;width:600px;text-align:center;font-size:14.25px;color:#333;font-weight:normal;transform:scaleX(0.9216);transform-origin:50% 0;">8</div>
<div class="t" style="left:987.30px;top:770.46px;width:600px;text-align:center;font-size:14.25px;color:#333;font-weight:normal;transform:scaleX(0.9216);transform-origin:50% 0;">8</div>
<div class="t" style="left:1083.50px;top:770.46px;width:600px;text-align:center;font-size:14.25px;color:#333;font-weight:normal;transform:scaleX(0.9216);transform-origin:50% 0;">0.04%</div>
<div class="t" style="left:1194.60px;top:770.46px;width:600px;text-align:center;font-size:14.25px;color:#333;font-weight:normal;transform:scaleX(0.9216);transform-origin:50% 0;">50%</div>
<div class="t" style="left:1287.25px;top:770.46px;width:600px;text-align:center;font-size:14.25px;color:#333;font-weight:normal;transform:scaleX(0.9216);transform-origin:50% 0;">-</div>
<div class="t" style="left:1369.90px;top:770.46px;width:600px;text-align:center;font-size:14.25px;color:#333;font-weight:normal;transform:scaleX(0.9216);transform-origin:50% 0;">-</div>
<div class="t" style="left:1440.95px;top:770.46px;width:600px;text-align:center;font-size:14.25px;color:#333;font-weight:normal;transform:scaleX(0.9216);transform-origin:50% 0;">-</div>
<div class="t" style="left:1530.85px;top:770.46px;width:600px;text-align:center;font-size:14.25px;color:#333;font-weight:normal;transform:scaleX(0.9216);transform-origin:50% 0;">9</div>
<div class="t" style="left:1624.15px;top:770.46px;width:600px;text-align:center;font-size:14.25px;color:#333;font-weight:normal;transform:scaleX(0.9216);transform-origin:50% 0;">0.02%</div>
<div class="t" style="left:1682.70px;top:770.46px;width:600px;text-align:center;font-size:14.25px;color:#333;font-weight:normal;transform:scaleX(0.9216);transform-origin:50% 0;">0</div>
<div style="position:absolute;left:328px;top:822.26px;width:1676.4px;height:1px;background:#e6e6e6"></div>
<div style="position:absolute;left:339px;top:802.15px;width:14px;height:14px;background:#d6d6d6;border-radius:2px"></div>
<svg style="left:341px;top:804.15px" width="10" height="10"><path d="M1.5 5l2.5 2.5 4.5-5" fill="none" stroke="#f4f4f4" stroke-width="1.5"/></svg>
<div class="t" style="left:83.90px;top:800.68px;width:600px;text-align:center;font-size:14.25px;color:#333;font-weight:normal;transform:scaleX(0.9216);transform-origin:50% 0;">8</div>
<div class="t" style="left:413.80px;top:800.68px;font-size:14.25px;color:#333;font-weight:normal;transform:scaleX(0.9216);transform-origin:0 0;">Carbonara Corey P.</div>
<div class="t" style="left:748.20px;top:800.68px;font-size:14.25px;color:#333;font-weight:normal;transform:scaleX(0.9216);transform-origin:0 0;">Baylor University</div>
<div class="t" style="left:1083.70px;top:800.68px;font-size:14.25px;color:#333;font-weight:normal;transform:scaleX(0.9216);transform-origin:0 0;">American</div>
<div class="t" style="left:912.80px;top:800.68px;width:600px;text-align:center;font-size:14.25px;color:#333;font-weight:normal;transform:scaleX(0.9216);transform-origin:50% 0;">8</div>
<div class="t" style="left:987.30px;top:800.68px;width:600px;text-align:center;font-size:14.25px;color:#333;font-weight:normal;transform:scaleX(0.9216);transform-origin:50% 0;">5</div>
<div class="t" style="left:1083.50px;top:800.68px;width:600px;text-align:center;font-size:14.25px;color:#333;font-weight:normal;transform:scaleX(0.9216);transform-origin:50% 0;">0.04%</div>
<div class="t" style="left:1194.60px;top:800.68px;width:600px;text-align:center;font-size:14.25px;color:#333;font-weight:normal;transform:scaleX(0.9216);transform-origin:50% 0;">32%</div>
<div class="t" style="left:1287.25px;top:800.68px;width:600px;text-align:center;font-size:14.25px;color:#333;font-weight:normal;transform:scaleX(0.9216);transform-origin:50% 0;">-</div>
<div class="t" style="left:1369.90px;top:800.68px;width:600px;text-align:center;font-size:14.25px;color:#333;font-weight:normal;transform:scaleX(0.9216);transform-origin:50% 0;">-</div>
<div class="t" style="left:1440.95px;top:800.68px;width:600px;text-align:center;font-size:14.25px;color:#333;font-weight:normal;transform:scaleX(0.9216);transform-origin:50% 0;">-</div>
<div class="t" style="left:1530.85px;top:800.68px;width:600px;text-align:center;font-size:14.25px;color:#333;font-weight:normal;transform:scaleX(0.9216);transform-origin:50% 0;">1</div>
<div class="t" style="left:1624.15px;top:800.68px;width:600px;text-align:center;font-size:14.25px;color:#333;font-weight:normal;transform:scaleX(0.9216);transform-origin:50% 0;">-</div>
<div class="t" style="left:1682.70px;top:800.68px;width:600px;text-align:center;font-size:14.25px;color:#333;font-weight:normal;transform:scaleX(0.9216);transform-origin:50% 0;">9</div>
<div style="position:absolute;left:328px;top:852.48px;width:1676.4px;height:1px;background:#e6e6e6"></div>
<div style="position:absolute;left:339px;top:832.37px;width:14px;height:14px;background:#d6d6d6;border-radius:2px"></div>
<svg style="left:341px;top:834.37px" width="10" height="10"><path d="M1.5 5l2.5 2.5 4.5-5" fill="none" stroke="#f4f4f4" stroke-width="1.5"/></svg>
<div class="t" style="left:83.90px;top:830.90px;width:600px;text-align:center;font-size:14.25px;color:#333;font-weight:normal;transform:scaleX(0.9216);transform-origin:50% 0;">9</div>
<div class="t" style="left:413.80px;top:830.90px;font-size:14.25px;color:#333;font-weight:normal;transform:scaleX(0.9216);transform-origin:0 0;">Bogdanowicz Mitchell J.</div>
<div class="t" style="left:748.20px;top:830.90px;font-size:14.25px;color:#333;font-weight:normal;transform:scaleX(0.9216);transform-origin:0 0;">Baylor University</div>
<div class="t" style="left:1083.70px;top:830.90px;font-size:14.25px;color:#333;font-weight:normal;transform:scaleX(0.9216);transform-origin:0 0;">American</div>
<div class="t" style="left:912.80px;top:830.90px;width:600px;text-align:center;font-size:14.25px;color:#333;font-weight:normal;transform:scaleX(0.9216);transform-origin:50% 0;">8</div>
<div class="t" style="left:987.30px;top:830.90px;width:600px;text-align:center;font-size:14.25px;color:#333;font-weight:normal;transform:scaleX(0.9216);transform-origin:50% 0;">5</div>
<div class="t" style="left:1083.50px;top:830.90px;width:600px;text-align:center;font-size:14.25px;color:#333;font-weight:normal;transform:scaleX(0.9216);transform-origin:50% 0;">0.04%</div>
<div class="t" style="left:1194.60px;top:830.90px;width:600px;text-align:center;font-size:14.25px;color:#333;font-weight:normal;transform:scaleX(0.9216);transform-origin:50% 0;">25%</div>
<div class="t" style="left:1287.25px;top:830.90px;width:600px;text-align:center;font-size:14.25px;color:#333;font-weight:normal;transform:scaleX(0.9216);transform-origin:50% 0;">-</div>
<div class="t" style="left:1369.90px;top:830.90px;width:600px;text-align:center;font-size:14.25px;color:#333;font-weight:normal;transform:scaleX(0.9216);transform-origin:50% 0;">-</div>
<div class="t" style="left:1440.95px;top:830.90px;width:600px;text-align:center;font-size:14.25px;color:#333;font-weight:normal;transform:scaleX(0.9216);transform-origin:50% 0;">-</div>
<div class="t" style="left:1530.85px;top:830.90px;width:600px;text-align:center;font-size:14.25px;color:#333;font-weight:normal;transform:scaleX(0.9216);transform-origin:50% 0;">1</div>
<div class="t" style="left:1624.15px;top:830.90px;width:600px;text-align:center;font-size:14.25px;color:#333;font-weight:normal;transform:scaleX(0.9216);transform-origin:50% 0;">-</div>
<div class="t" style="left:1682.70px;top:830.90px;width:600px;text-align:center;font-size:14.25px;color:#333;font-weight:normal;transform:scaleX(0.9216);transform-origin:50% 0;">9</div>
<div style="position:absolute;left:328px;top:882.7px;width:1676.4px;height:1px;background:#e6e6e6"></div>
<div style="position:absolute;left:339px;top:862.59px;width:14px;height:14px;background:#d6d6d6;border-radius:2px"></div>
<svg style="left:341px;top:864.59px" width="10" height="10"><path d="M1.5 5l2.5 2.5 4.5-5" fill="none" stroke="#f4f4f4" stroke-width="1.5"/></svg>
<div class="t" style="left:83.90px;top:861.12px;width:600px;text-align:center;font-size:14.25px;color:#333;font-weight:normal;transform:scaleX(0.9216);transform-origin:50% 0;">10</div>
<div class="t" style="left:413.80px;top:861.12px;font-size:14.25px;color:#333;font-weight:normal;transform:scaleX(0.9216);transform-origin:0 0;">Mark E. Thompson</div>
<div class="t" style="left:748.20px;top:861.12px;font-size:14.25px;color:#333;font-weight:normal;transform:scaleX(0.9216);transform-origin:0 0;">University of Southern California (USC)</div>
<div class="t" style="left:1083.70px;top:861.12px;font-size:14.25px;color:#333;font-weight:normal;transform:scaleX(0.9216);transform-origin:0 0;">American</div>
<div class="t" style="left:912.80px;top:861.12px;width:600px;text-align:center;font-size:14.25px;color:#333;font-weight:normal;transform:scaleX(0.9216);transform-origin:50% 0;">8</div>
<div class="t" style="left:987.30px;top:861.12px;width:600px;text-align:center;font-size:14.25px;color:#333;font-weight:normal;transform:scaleX(0.9216);transform-origin:50% 0;">2</div>
<div class="t" style="left:1083.50px;top:861.12px;width:600px;text-align:center;font-size:14.25px;color:#333;font-weight:normal;transform:scaleX(0.9216);transform-origin:50% 0;">0.04%</div>
<div class="t" style="left:1194.60px;top:861.12px;width:600px;text-align:center;font-size:14.25px;color:#333;font-weight:normal;transform:scaleX(0.9216);transform-origin:50% 0;">10.3%</div>
<div class="t" style="left:1287.25px;top:861.12px;width:600px;text-align:center;font-size:14.25px;color:#333;font-weight:normal;transform:scaleX(0.9216);transform-origin:50% 0;">-</div>
<div class="t" style="left:1369.90px;top:861.12px;width:600px;text-align:center;font-size:14.25px;color:#333;font-weight:normal;transform:scaleX(0.9216);transform-origin:50% 0;">-</div>
<div class="t" style="left:1440.95px;top:861.12px;width:600px;text-align:center;font-size:14.25px;color:#333;font-weight:normal;transform:scaleX(0.9216);transform-origin:50% 0;">-</div>
<div class="t" style="left:1530.85px;top:861.12px;width:600px;text-align:center;font-size:14.25px;color:#333;font-weight:normal;transform:scaleX(0.9216);transform-origin:50% 0;">2</div>
<div class="t" style="left:1624.15px;top:861.12px;width:600px;text-align:center;font-size:14.25px;color:#333;font-weight:normal;transform:scaleX(0.9216);transform-origin:50% 0;">-</div>
<div class="t" style="left:1682.70px;top:861.12px;width:600px;text-align:center;font-size:14.25px;color:#333;font-weight:normal;transform:scaleX(0.9216);transform-origin:50% 0;">7</div>
<div style="position:absolute;left:339px;top:531.8px;width:14px;height:14px;background:#d6d6d6;border-radius:2px"></div>
<svg style="left:341px;top:534px" width="10" height="10"><path d="M1.5 5l2.5 2.5 4.5-5" fill="none" stroke="#ececec" stroke-width="1.5"/></svg>
<div class="t" style="left:83.90px;top:529.59px;width:600px;text-align:center;font-size:14.66px;color:#1f2733;font-weight:bold;transform:scaleX(0.8990);transform-origin:50% 0;">No.</div>
<div class="t" style="left:272.90px;top:523.09px;width:600px;text-align:center;font-size:14.66px;color:#1f2733;font-weight:bold;transform:scaleX(0.8990);transform-origin:50% 0;">Inventor</div>
<svg style="left:569.9px;top:568.5px" width="6" height="9" viewBox="0 0 6 9"><path d="M0.8 3.2L3 1l2.2 2.2M0.8 5.8L3 8l2.2-2.2" fill="none" stroke="#333" stroke-width="1.2"/></svg>
<div class="t" style="left:607.90px;top:523.09px;width:600px;text-align:center;font-size:14.66px;color:#1f2733;font-weight:bold;transform:scaleX(0.8990);transform-origin:50% 0;">Company of employment (applicant)</div>
<svg style="left:904.9000000000001px;top:568.5px" width="6" height="9" viewBox="0 0 6 9"><path d="M0.8 3.2L3 1l2.2 2.2M0.8 5.8L3 8l2.2-2.2" fill="none" stroke="#333" stroke-width="1.2"/></svg>
<div class="t" style="left:823.20px;top:513.09px;width:600px;text-align:center;font-size:14.66px;color:#1f2733;font-weight:bold;transform:scaleX(0.8990);transform-origin:50% 0;">Ethnicity</div>
<div class="t" style="left:823.20px;top:533.09px;width:600px;text-align:center;font-size:14.66px;color:#1f2733;font-weight:bold;transform:scaleX(0.8990);transform-origin:50% 0;">(presumed)</div>
<svg style="left:1120.2px;top:568.5px" width="6" height="9" viewBox="0 0 6 9"><path d="M0.8 3.2L3 1l2.2 2.2M0.8 5.8L3 8l2.2-2.2" fill="none" stroke="#333" stroke-width="1.2"/></svg>
<div class="t" style="left:912.80px;top:513.09px;width:600px;text-align:center;font-size:14.66px;color:#1f2733;font-weight:bold;transform:scaleX(0.8990);transform-origin:50% 0;">Published</div>
<div class="t" style="left:912.80px;top:533.09px;width:600px;text-align:center;font-size:14.66px;color:#1f2733;font-weight:bold;transform:scaleX(0.8990);transform-origin:50% 0;">patents</div>
<svg style="left:1209.8px;top:568.5px" width="6" height="9" viewBox="0 0 6 9"><path d="M0.8 3.2L3 1l2.2 2.2M0.8 5.8L3 8l2.2-2.2" fill="none" stroke="#333" stroke-width="1.2"/></svg>
<div class="t" style="left:987.30px;top:513.09px;width:600px;text-align:center;font-size:14.66px;color:#1f2733;font-weight:bold;transform:scaleX(0.8990);transform-origin:50% 0;">Issued</div>
<div class="t" style="left:987.30px;top:533.09px;width:600px;text-align:center;font-size:14.66px;color:#1f2733;font-weight:bold;transform:scaleX(0.8990);transform-origin:50% 0;">patents</div>
<svg style="left:1284.3px;top:568.5px" width="6" height="9" viewBox="0 0 6 9"><path d="M0.8 3.2L3 1l2.2 2.2M0.8 5.8L3 8l2.2-2.2" fill="none" stroke="#333" stroke-width="1.2"/></svg>
<div class="t" style="left:1083.50px;top:523.09px;width:600px;text-align:center;font-size:14.66px;color:#1f2733;font-weight:bold;transform:scaleX(0.8990);transform-origin:50% 0;">Share_publications</div>
<svg style="left:1380.5px;top:568.5px" width="6" height="9" viewBox="0 0 6 9"><path d="M0.8 3.2L3 1l2.2 2.2M0.8 5.8L3 8l2.2-2.2" fill="none" stroke="#333" stroke-width="1.2"/></svg>
<div class="t" style="left:1194.60px;top:523.09px;width:600px;text-align:center;font-size:14.66px;color:#1f2733;font-weight:bold;transform:scaleX(0.8990);transform-origin:50% 0;">Concentration</div>
<svg style="left:1491.6px;top:568.5px" width="6" height="9" viewBox="0 0 6 9"><path d="M0.8 3.2L3 1l2.2 2.2M0.8 5.8L3 8l2.2-2.2" fill="none" stroke="#333" stroke-width="1.2"/></svg>
<div class="t" style="left:1287.25px;top:513.09px;width:600px;text-align:center;font-size:14.66px;color:#1f2733;font-weight:bold;transform:scaleX(0.8990);transform-origin:50% 0;">Transacted</div>
<div class="t" style="left:1287.25px;top:533.09px;width:600px;text-align:center;font-size:14.66px;color:#1f2733;font-weight:bold;transform:scaleX(0.8990);transform-origin:50% 0;">patents</div>
<svg style="left:1584.25px;top:568.5px" width="6" height="9" viewBox="0 0 6 9"><path d="M0.8 3.2L3 1l2.2 2.2M0.8 5.8L3 8l2.2-2.2" fill="none" stroke="#333" stroke-width="1.2"/></svg>
<div class="t" style="left:1369.90px;top:513.09px;width:600px;text-align:center;font-size:14.66px;color:#1f2733;font-weight:bold;transform:scaleX(0.8990);transform-origin:50% 0;">Litigated</div>
<div class="t" style="left:1369.90px;top:533.09px;width:600px;text-align:center;font-size:14.66px;color:#1f2733;font-weight:bold;transform:scaleX(0.8990);transform-origin:50% 0;">patents</div>
<svg style="left:1666.9px;top:568.5px" width="6" height="9" viewBox="0 0 6 9"><path d="M0.8 3.2L3 1l2.2 2.2M0.8 5.8L3 8l2.2-2.2" fill="none" stroke="#333" stroke-width="1.2"/></svg>
<div class="t" style="left:1440.95px;top:513.09px;width:600px;text-align:center;font-size:14.66px;color:#1f2733;font-weight:bold;transform:scaleX(0.8990);transform-origin:50% 0;">Trialed</div>
<div class="t" style="left:1440.95px;top:533.09px;width:600px;text-align:center;font-size:14.66px;color:#1f2733;font-weight:bold;transform:scaleX(0.8990);transform-origin:50% 0;">patents</div>
<svg style="left:1737.95px;top:568.5px" width="6" height="9" viewBox="0 0 6 9"><path d="M0.8 3.2L3 1l2.2 2.2M0.8 5.8L3 8l2.2-2.2" fill="none" stroke="#333" stroke-width="1.2"/></svg>
<div class="t" style="left:1530.85px;top:503.09px;width:600px;text-align:center;font-size:14.66px;color:#1f2733;font-weight:bold;transform:scaleX(0.8990);transform-origin:50% 0;">Forward</div>
<div class="t" style="left:1530.85px;top:523.09px;width:600px;text-align:center;font-size:14.66px;color:#1f2733;font-weight:bold;transform:scaleX(0.8990);transform-origin:50% 0;">citations by</div>
<div class="t" style="left:1530.85px;top:543.09px;width:600px;text-align:center;font-size:14.66px;color:#1f2733;font-weight:bold;transform:scaleX(0.8990);transform-origin:50% 0;">examiners</div>
<svg style="left:1827.85px;top:568.5px" width="6" height="9" viewBox="0 0 6 9"><path d="M0.8 3.2L3 1l2.2 2.2M0.8 5.8L3 8l2.2-2.2" fill="none" stroke="#333" stroke-width="1.2"/></svg>
<div class="t" style="left:1624.15px;top:513.09px;width:600px;text-align:center;font-size:14.66px;color:#1f2733;font-weight:bold;transform:scaleX(0.8990);transform-origin:50% 0;">Share_FC-</div>
<div class="t" style="left:1624.15px;top:533.09px;width:600px;text-align:center;font-size:14.66px;color:#1f2733;font-weight:bold;transform:scaleX(0.8990);transform-origin:50% 0;">E</div>
<svg style="left:1921.15px;top:568.5px" width="6" height="9" viewBox="0 0 6 9"><path d="M0.8 3.2L3 1l2.2 2.2M0.8 5.8L3 8l2.2-2.2" fill="none" stroke="#333" stroke-width="1.2"/></svg>
<div class="t" style="left:1682.70px;top:513.09px;width:600px;text-align:center;font-size:14.66px;color:#1f2733;font-weight:bold;transform:scaleX(0.8990);transform-origin:50% 0;">Int.</div>
<div class="t" style="left:1682.70px;top:533.09px;width:600px;text-align:center;font-size:14.66px;color:#1f2733;font-weight:bold;transform:scaleX(0.8990);transform-origin:50% 0;">Fam.</div>
<svg style="left:1979.7px;top:568.5px" width="6" height="9" viewBox="0 0 6 9"><path d="M0.8 3.2L3 1l2.2 2.2M0.8 5.8L3 8l2.2-2.2" fill="none" stroke="#333" stroke-width="1.2"/></svg>
<div class="t" style="left:846.00px;top:497.04px;width:600px;text-align:right;font-size:10.00px;color:#d0101e;font-weight:bold;transform:scaleX(0.9000);transform-origin:100% 0;">(1)</div>
<div class="t" style="left:941.20px;top:497.04px;width:600px;text-align:right;font-size:10.00px;color:#d0101e;font-weight:bold;transform:scaleX(0.9000);transform-origin:100% 0;">(2)</div>
<div class="t" style="left:1360.00px;top:497.04px;width:600px;text-align:right;font-size:10.00px;color:#d0101e;font-weight:bold;transform:scaleX(0.9000);transform-origin:100% 0;">(3)</div>
<div class="t" style="left:328.90px;top:906.49px;font-size:13.13px;color:#a5a5a5;font-weight:normal;transform:scaleX(0.8875);transform-origin:0 0;">Limit</div>
<div style="position:absolute;left:361px;top:901px;width:26.6px;height:23px;background:#0e2b80;border-radius:4px"></div>
<div class="t" style="left:74.30px;top:906.60px;width:600px;text-align:center;font-size:13.00px;color:#fff;font-weight:bold;transform:scaleX(0.9200);transform-origin:50% 0;">10</div>
<div class="t" style="left:106.20px;top:906.51px;width:600px;text-align:center;font-size:13.10px;color:#9a9a9a;font-weight:normal;transform:scaleX(0.9300);transform-origin:50% 0;">20</div>
<div class="t" style="left:137.70px;top:906.51px;width:600px;text-align:center;font-size:13.10px;color:#9a9a9a;font-weight:normal;transform:scaleX(0.9300);transform-origin:50% 0;">25</div>
<div class="t" style="left:169.05px;top:906.51px;width:600px;text-align:center;font-size:13.10px;color:#9a9a9a;font-weight:normal;transform:scaleX(0.9300);transform-origin:50% 0;">50</div>
<div class="t" style="left:201.90px;top:906.51px;width:600px;text-align:center;font-size:13.10px;color:#9a9a9a;font-weight:normal;transform:scaleX(0.9300);transform-origin:50% 0;">100</div>
<div class="t" style="left:235.70px;top:906.51px;width:600px;text-align:center;font-size:13.10px;color:#9a9a9a;font-weight:normal;transform:scaleX(0.9300);transform-origin:50% 0;">250</div>
<div class="t" style="left:269.60px;top:906.51px;width:600px;text-align:center;font-size:13.10px;color:#9a9a9a;font-weight:normal;transform:scaleX(0.9300);transform-origin:50% 0;">500</div>
<div style="position:absolute;left:1684.4px;top:898.5px;width:320.0px;height:28px;border:1px solid #e6e6e6;border-radius:3px;box-sizing:border-box;background:#fff"></div>
<div style="position:absolute;left:1711.0666666666668px;top:899.5px;width:1px;height:26px;background:#ececec"></div>
<div style="position:absolute;left:1737.7333333333333px;top:899.5px;width:1px;height:26px;background:#ececec"></div>
<div style="position:absolute;left:1764.4px;top:899.5px;width:1px;height:26px;background:#ececec"></div>
<div style="position:absolute;left:1791.0666666666668px;top:899.5px;width:1px;height:26px;background:#ececec"></div>
<div style="position:absolute;left:1817.7333333333333px;top:899.5px;width:1px;height:26px;background:#ececec"></div>
<div style="position:absolute;left:1844.4px;top:899.5px;width:1px;height:26px;background:#ececec"></div>
<div style="position:absolute;left:1871.0666666666668px;top:899.5px;width:1px;height:26px;background:#ececec"></div>
<div style="position:absolute;left:1897.7333333333333px;top:899.5px;width:1px;height:26px;background:#ececec"></div>
<div style="position:absolute;left:1924.4px;top:899.5px;width:1px;height:26px;background:#ececec"></div>
<div style="position:absolute;left:1951.0666666666668px;top:899.5px;width:1px;height:26px;background:#ececec"></div>
<div style="position:absolute;left:1711.0666666666668px;top:898.5px;width:26.666666666666668px;height:28px;background:#0a2a86"></div>
<svg style="left:1694.7333333333333px;top:908px" width="7" height="10"><path d="M5.5 1L1.5 5l4 4" fill="none" stroke="#666" stroke-width="1.3"/></svg>
<svg style="left:1988.0666666666668px;top:908px" width="7" height="10"><path d="M1.5 1l4 4-4 4" fill="none" stroke="#666" stroke-width="1.3"/></svg>
<div class="t" style="left:1424.40px;top:906.74px;width:600px;text-align:center;font-size:13.30px;color:#fff;font-weight:bold;transform:scaleX(0.9200);transform-origin:50% 0;">1</div>
<div class="t" style="left:1451.07px;top:906.74px;width:600px;text-align:center;font-size:13.30px;color:#8a8a8a;font-weight:normal;transform:scaleX(0.9200);transform-origin:50% 0;">2</div>
<div class="t" style="left:1477.73px;top:906.74px;width:600px;text-align:center;font-size:13.30px;color:#8a8a8a;font-weight:normal;transform:scaleX(0.9200);transform-origin:50% 0;">3</div>
<div class="t" style="left:1504.40px;top:906.74px;width:600px;text-align:center;font-size:13.30px;color:#8a8a8a;font-weight:normal;transform:scaleX(0.9200);transform-origin:50% 0;">4</div>
<div class="t" style="left:1531.07px;top:906.74px;width:600px;text-align:center;font-size:13.30px;color:#8a8a8a;font-weight:normal;transform:scaleX(0.9200);transform-origin:50% 0;">5</div>
<div class="t" style="left:1557.73px;top:906.74px;width:600px;text-align:center;font-size:13.30px;color:#8a8a8a;font-weight:normal;transform:scaleX(0.9200);transform-origin:50% 0;">6</div>
<div class="t" style="left:1584.40px;top:906.74px;width:600px;text-align:center;font-size:13.30px;color:#8a8a8a;font-weight:normal;transform:scaleX(0.9200);transform-origin:50% 0;">7</div>
<div class="t" style="left:1611.07px;top:906.74px;width:600px;text-align:center;font-size:13.30px;color:#8a8a8a;font-weight:normal;transform:scaleX(0.9200);transform-origin:50% 0;">8</div>
<div class="t" style="left:1637.73px;top:906.74px;width:600px;text-align:center;font-size:13.30px;color:#8a8a8a;font-weight:normal;transform:scaleX(0.9200);transform-origin:50% 0;">9</div>
<div class="t" style="left:1664.40px;top:906.74px;width:600px;text-align:center;font-size:13.30px;color:#8a8a8a;font-weight:normal;transform:scaleX(0.9200);transform-origin:50% 0;">10</div>
</body></html>
